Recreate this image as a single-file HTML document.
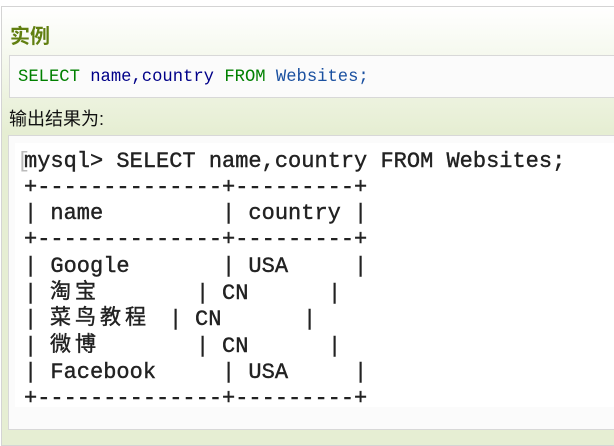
<!DOCTYPE html>
<html><head><meta charset="utf-8"><style>
*{margin:0;padding:0;box-sizing:border-box}
body{width:614px;height:441px;overflow:hidden;background:#fff;position:relative;font-family:"Liberation Sans","Noto Sans CJK SC",sans-serif}
#outer{position:absolute;left:1px;top:6px;width:620px;height:440px;border:1px solid #d4d4d4;background:linear-gradient(#fff 0px,#f3f7ea 60px,#e6eed3 125px,#e6eed3 100%)}
h2{position:absolute;left:10px;top:20px;font-size:20px;font-weight:bold;color:#617f10;font-family:"Liberation Sans","Noto Sans CJK SC",sans-serif}
#code{position:absolute;left:9px;top:55px;width:620px;height:43px;background:#fbfbfb;border:1px solid #d8d8d8;font-family:"Liberation Mono",monospace;font-size:17.2px;line-height:44px;padding-left:8px;white-space:pre}
.k{color:#008000}.n{color:#000088}.w{color:#1a50a0}
#out{position:absolute;left:9px;top:105px;font-size:18px;color:#111}
#box{position:absolute;left:8px;top:135px;width:620px;height:295px;background:#fbfbfb;border:1px solid #d8d8d8}
#img{position:absolute;left:15px;top:143px;width:600px;height:264px;background:#fff}
.r{position:absolute;font-family:"Liberation Mono","Noto Sans CJK SC",monospace;font-size:22px;color:#222;white-space:pre;line-height:26px;-webkit-text-stroke:0.4px #222}
.r span{position:absolute;top:0}
.c{letter-spacing:4px;font-size:21px}
</style></head><body>
<div id="outer"></div>
<h2>实例</h2>
<div id="code"><span class="k">SELECT</span> <span class="n">name,country</span> <span class="k">FROM</span> <span class="w">Websites;</span></div>
<div id="out">输出结果为:</div>
<div id="box"></div>
<div id="img"></div>
<div class="r" style="left:17px;top:149px;color:#bbb;-webkit-text-stroke:0">[</div>
<div class="r" style="left:24px;top:149px">mysql&gt; SELECT name,country FROM Websites;</div>
<div class="r" style="left:24px;top:175px">+--------------+---------+</div>
<div class="r" style="left:24px;top:201px">| name         | country |</div>
<div class="r" style="left:24px;top:227px">+--------------+---------+</div>
<div class="r" style="left:24px;top:254px">| Google       | USA     |</div>
<div class="r" style="left:0;top:281px;width:614px"><span style="left:24px">|</span><span class="c" style="left:50px">淘宝</span><span style="left:196px">|</span><span style="left:222px">CN</span><span style="left:328px">|</span></div>
<div class="r" style="left:0;top:307px;width:614px"><span style="left:24px">|</span><span class="c" style="left:50px">菜鸟教程</span><span style="left:169px">|</span><span style="left:195px">CN</span><span style="left:303px">|</span></div>
<div class="r" style="left:0;top:334px;width:614px"><span style="left:24px">|</span><span class="c" style="left:50px">微博</span><span style="left:196px">|</span><span style="left:222px">CN</span><span style="left:328px">|</span></div>
<div class="r" style="left:24px;top:360px">| Facebook     | USA     |</div>
<div class="r" style="left:24px;top:386px">+--------------+---------+</div>
</body></html>
